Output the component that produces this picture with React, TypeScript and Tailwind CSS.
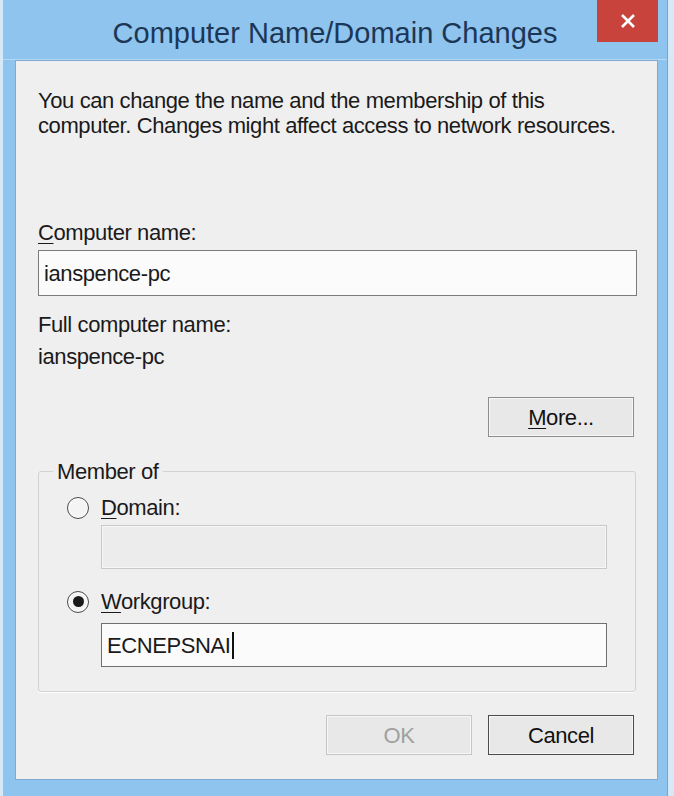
import React from "react";

const font = { fontFamily: '"Liberation Sans", Arial, sans-serif' };

const Key = ({ c }: { c: string }) => (
  <span className="underline decoration-1 underline-offset-[3px]">{c}</span>
);

const Radio = ({ checked }: { checked?: boolean }) => (
  <span className="flex h-[22px] w-[22px] items-center justify-center rounded-full border border-[#4a4a4a] bg-[#f4f4f4] shadow-[inset_0_0_0_1px_#ffffff]">
    {checked && <span className="h-[11px] w-[11px] rounded-full bg-[#1a1a1a]" />}
  </span>
);

const Button = ({
  children,
  disabled,
  dark,
}: {
  children: React.ReactNode;
  disabled?: boolean;
  dark?: boolean;
}) => (
  <div
    className={`flex h-[40px] w-[146px] items-center justify-center border bg-[#e8e8e8] ${
      disabled
        ? "border-[#c6c6c6] text-[#a0a0a0]"
        : dark
        ? "border-[#4b4b4b] text-[#111]"
        : "border-[#8d8d8d] text-[#111]"
    } shadow-[inset_0_0_0_1px_#f6f6f6]`}
  >
    {children}
  </div>
);

export default function App() {
  return (
    <div
      className="h-[796px] w-[674px] overflow-hidden bg-[#d7e8f6] text-[22px] leading-[25px] tracking-[-0.4px] text-[#1a1a1a]"
      style={font}
    >
      <div className="ml-[3px] flex h-[796px] w-[665px] flex-col border-r border-[#6fa6d6] bg-[#8ec4ee]">
        {/* title bar */}
        <div className="relative flex h-[60px] items-center justify-center border-b border-[#b4d8f4]">
          <span className="pt-[6px] text-[29px] leading-[34px] tracking-[0px] text-[#1c3756]">
            Computer Name/Domain Changes
          </span>
          <div className="absolute right-[9px] top-0 flex h-[42px] w-[61px] items-center justify-center bg-[#c8433b]">
            <svg width="16" height="16" viewBox="0 0 16 16">
              <path d="M2 2 L14 14 M14 2 L2 14" stroke="#ffffff" strokeWidth="2.6" />
            </svg>
          </div>
        </div>

        {/* client area */}
        <div className="ml-[12px] flex h-[720px] w-[643px] flex-col border border-[#7fa9d0] bg-[#f0efef] px-[22px] pt-[27px]">
          <p>
            You can change the name and the membership of this
            <br />
            computer. Changes might affect access to network resources.
          </p>

          <div className="mt-[82px]">
            <Key c="C" />
            omputer name:
          </div>
          <div className="mt-[5px] flex h-[46px] w-[599px] items-center border border-[#7c7c7c] bg-[#fbfbfb] px-[5px]">
            ianspence-pc
          </div>

          <div className="mt-[16px]">Full computer name:</div>
          <div className="mt-[7px]">ianspence-pc</div>

          <div className="mt-[28px] flex justify-end pr-[1px]">
            <Button>
              <span>
                <Key c="M" />
                ore...
              </span>
            </Button>
          </div>

          <fieldset className="mt-[22px] w-[598px] rounded-[3px] border border-[#d2d2d2] pb-[24px] shadow-[0_1px_0_#ffffff]">
            <legend className="ml-[14px] px-[4px]">Member of</legend>

            <div className="pl-[28px]">
              <label className="mt-[11px] flex items-center gap-[12px]">
                <Radio />
                <span>
                  <Key c="D" />
                  omain:
                </span>
              </label>
              <div className="ml-[34px] mt-[5px] h-[44px] w-[506px] border border-[#c9c9c9] bg-[#ececec] shadow-[inset_0_0_0_1px_#f7f7f7]" />

              <label className="mt-[20px] flex items-center gap-[12px]">
                <Radio checked />
                <span>
                  <Key c="W" />
                  orkgroup:
                </span>
              </label>
              <div className="ml-[34px] mt-[9px] flex h-[44px] w-[506px] items-center border border-[#6f6f6f] bg-[#fbfbfb] px-[5px]">
                <span>ECNEPSNAI</span>
                <span className="ml-[1px] inline-block h-[27px] w-[2px] bg-[#111]" />
              </div>
            </div>
          </fieldset>

          <div className="mt-[23px] flex justify-end gap-[16px] pr-[1px]">
            <Button disabled>OK</Button>
            <Button dark>Cancel</Button>
          </div>
        </div>
      </div>
    </div>
  );
}
